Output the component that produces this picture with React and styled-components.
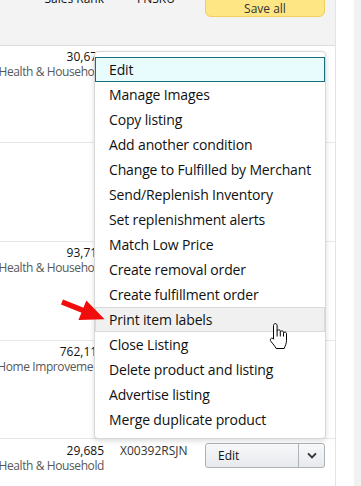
import React from "react";
import styled, { createGlobalStyle } from "styled-components";

const GlobalStyle = createGlobalStyle`
  html, body { margin: 0; padding: 0; background: #fff; overflow: hidden; }
  body { font-family: "Open Sans", "Noto Sans", sans-serif; color: #0f1111; }
  * { box-sizing: border-box; }
`;

const Page = styled.div`
  position: relative;
  display: flex;
  width: 361px;
  height: 486px;
  overflow: hidden;
`;

const Main = styled.div`
  width: 336px;
  border-right: 1px solid #e3e3e3;
  display: flex;
  flex-direction: column;
`;

const Gutter = styled.div`
  width: 18px;
  background: #fff;
`;

const ScrollTrack = styled.div`
  flex: 1;
  background: #f1f1f1;
`;

const cols = "120px 85px 120px";

const Header = styled.div`
  height: 46px;
  flex-shrink: 0;
  background: #f3f3f3;
  border-bottom: 1px solid #dddddd;
  display: grid;
  grid-template-columns: ${cols};
  align-items: start;
`;

const HeadCell = styled.div`
  margin-top: -9px;
  font-size: 12px;
  line-height: 16px;
  color: #0f1111;
  white-space: nowrap;
  text-align: ${(p) => (p.$right ? "right" : "left")};
  padding-right: ${(p) => (p.$right ? "16px" : "0")};
  padding-left: ${(p) => p.$indent || 0}px;
`;

const SaveAll = styled.button`
  margin-top: -7px;
  width: 120px;
  height: 24px;
  padding: 0;
  background: #fee685;
  border: 1px solid #f3d05a;
  border-radius: 6px;
  font-family: inherit;
  font-size: 12px;
  color: #333;
  line-height: 22px;
  padding-top: 4px;
`;

const Row = styled.div`
  height: ${(p) => p.$h}px;
  flex-shrink: 0;
  border-bottom: 1px solid #e7e7e7;
  display: grid;
  grid-template-columns: ${cols};
  align-items: start;
  padding-top: ${(p) => p.$pt || 4}px;
`;

const RankCell = styled.div`
  display: flex;
  flex-direction: column;
  align-items: flex-end;
  padding-right: 16px;
  min-width: 0;
`;

const RankNum = styled.div`
  font-size: 12px;
  line-height: 15px;
  color: #0f1111;
  white-space: nowrap;
`;

const Category = styled.div`
  font-size: 12px;
  line-height: 15px;
  letter-spacing: -0.4px;
  color: #565959;
  white-space: nowrap;
`;

const Fnsku = styled.div`
  font-size: 12px;
  line-height: 15px;
  color: #333;
  white-space: nowrap;
`;

const SplitButton = styled.div`
  display: flex;
  width: 120px;
  height: 25px;
  border: 1px solid #adb1b8;
  border-radius: 3px;
  background: linear-gradient(#f7f8fa, #e7e9ec);
  box-shadow: inset 0 1px 0 rgba(255, 255, 255, 0.6);
`;

const SplitMain = styled.div`
  flex: 1;
  display: flex;
  align-items: center;
  padding-left: 12px;
  font-size: 12px;
  color: #0f1111;
  border-right: 1px solid #adb1b8;
`;

const SplitCaret = styled.div`
  width: 25px;
  display: flex;
  align-items: center;
  justify-content: center;
`;

const Menu = styled.div`
  position: absolute;
  left: 94px;
  top: 51px;
  width: 232px;
  background: #fff;
  border: 1px solid #d5d9d9;
  border-radius: 4px;
  box-shadow: 0 2px 5px rgba(15, 17, 17, 0.15);
  padding: 5px 0 6px;
  display: flex;
  flex-direction: column;
`;

const MenuItem = styled.div`
  height: 25px;
  display: flex;
  align-items: center;
  padding: 0 13px;
  font-size: 14px;
  letter-spacing: -0.15px;
  color: #0f1111;
  white-space: nowrap;
  border: 1px solid
    ${(p) =>
      p.$state === "focus" ? "#16707c" : p.$state === "hover" ? "#d9d9d9" : "transparent"};
  background: ${(p) =>
    p.$state === "focus" ? "#e8fcfd" : p.$state === "hover" ? "#f0f0f0" : "transparent"};
`;

const Overlay = styled.svg`
  position: absolute;
  left: ${(p) => p.$x}px;
  top: ${(p) => p.$y}px;
  overflow: visible;
`;

const rows = [
  { h: 97, pt: 3, rank: "30,671", cat: "Health & Household" },
  { h: 99, rank: "", cat: "" },
  { h: 99, pt: 3, rank: "93,717", cat: "Health & Household" },
  { h: 98, pt: 3, rank: "762,117", cat: "Home Improvement" },
];

const items = [
  "Edit",
  "Manage Images",
  "Copy listing",
  "Add another condition",
  "Change to Fulfilled by Merchant",
  "Send/Replenish Inventory",
  "Set replenishment alerts",
  "Match Low Price",
  "Create removal order",
  "Create fulfillment order",
  "Print item labels",
  "Close Listing",
  "Delete product and listing",
  "Advertise listing",
  "Merge duplicate product",
];

function Chevron() {
  return (
    <svg width="10" height="7" viewBox="0 0 10 7">
      <path d="M1 1.3 L5 5.3 L9 1.3" fill="none" stroke="#333" strokeWidth="1.9" />
    </svg>
  );
}

function RedArrow() {
  return (
    <Overlay $x={60} $y={296} width="50" height="36" viewBox="0 0 50 36">
      <g transform="translate(2 6) rotate(22)">
        <polygon points="0,-2.7 25,-2.7 25,2.7 0,2.7" fill="#f20d0d" />
        <polygon points="22,-10.5 46,0 22,10.5" fill="#f20d0d" />
      </g>
    </Overlay>
  );
}

function HandCursor() {
  return (
    <Overlay $x={269} $y={323} width="19" height="27" viewBox="0 0 19 27">
      <path
        d="M4.5 15 V2.6 C4.5 1.4 5.3 0.6 6.3 0.6 C7.3 0.6 8.1 1.4 8.1 2.6 V8.4 C8.1 7.4 8.8 6.8 9.7 6.8 C10.6 6.8 11.3 7.4 11.3 8.4 V9.4 C11.3 8.5 12 7.9 12.9 7.9 C13.8 7.9 14.5 8.5 14.5 9.4 V10.5 C14.5 9.6 15.2 9.1 16 9.1 C16.8 9.1 17.5 9.7 17.5 10.6 V17.5 C17.5 20.5 16.3 22.5 15.2 25.5 H7.2 C6.2 23.5 3.8 20.8 1.8 18.2 C1 17.2 1.2 15.9 2.2 15.4 C3 15 3.9 15.3 4.5 16.2 Z"
        fill="#fff"
        stroke="#000"
        strokeWidth="1"
        strokeLinejoin="round"
      />
      <path d="M8.1 8.4 V13.5 M11.3 9.4 V13.5 M14.5 10.5 V13.5" stroke="#000" strokeWidth="1" fill="none" />
    </Overlay>
  );
}

export default function App() {
  return (
    <>
      <GlobalStyle />
      <Page>
        <Main>
          <Header>
            <HeadCell $right>Sales Rank</HeadCell>
            <HeadCell $indent={17}>FNSKU</HeadCell>
            <SaveAll>Save all</SaveAll>
          </Header>
          {rows.map((r, i) => (
            <Row key={i} $h={r.h} $pt={r.pt}>
              <RankCell>
                <RankNum>{r.rank}</RankNum>
                <Category>{r.cat}</Category>
              </RankCell>
            </Row>
          ))}
          <Row $h={60}>
            <RankCell>
              <RankNum>29,685</RankNum>
              <Category>Health &amp; Household</Category>
            </RankCell>
            <Fnsku>X00392RSJN</Fnsku>
            <SplitButton>
              <SplitMain>Edit</SplitMain>
              <SplitCaret>
                <Chevron />
              </SplitCaret>
            </SplitButton>
          </Row>
        </Main>
        <Gutter />
        <ScrollTrack />
        <Menu>
          {items.map((t, i) => (
            <MenuItem key={t} $state={i === 0 ? "focus" : i === 10 ? "hover" : undefined}>
              {t}
            </MenuItem>
          ))}
        </Menu>
        <RedArrow />
        <HandCursor />
      </Page>
    </>
  );
}
